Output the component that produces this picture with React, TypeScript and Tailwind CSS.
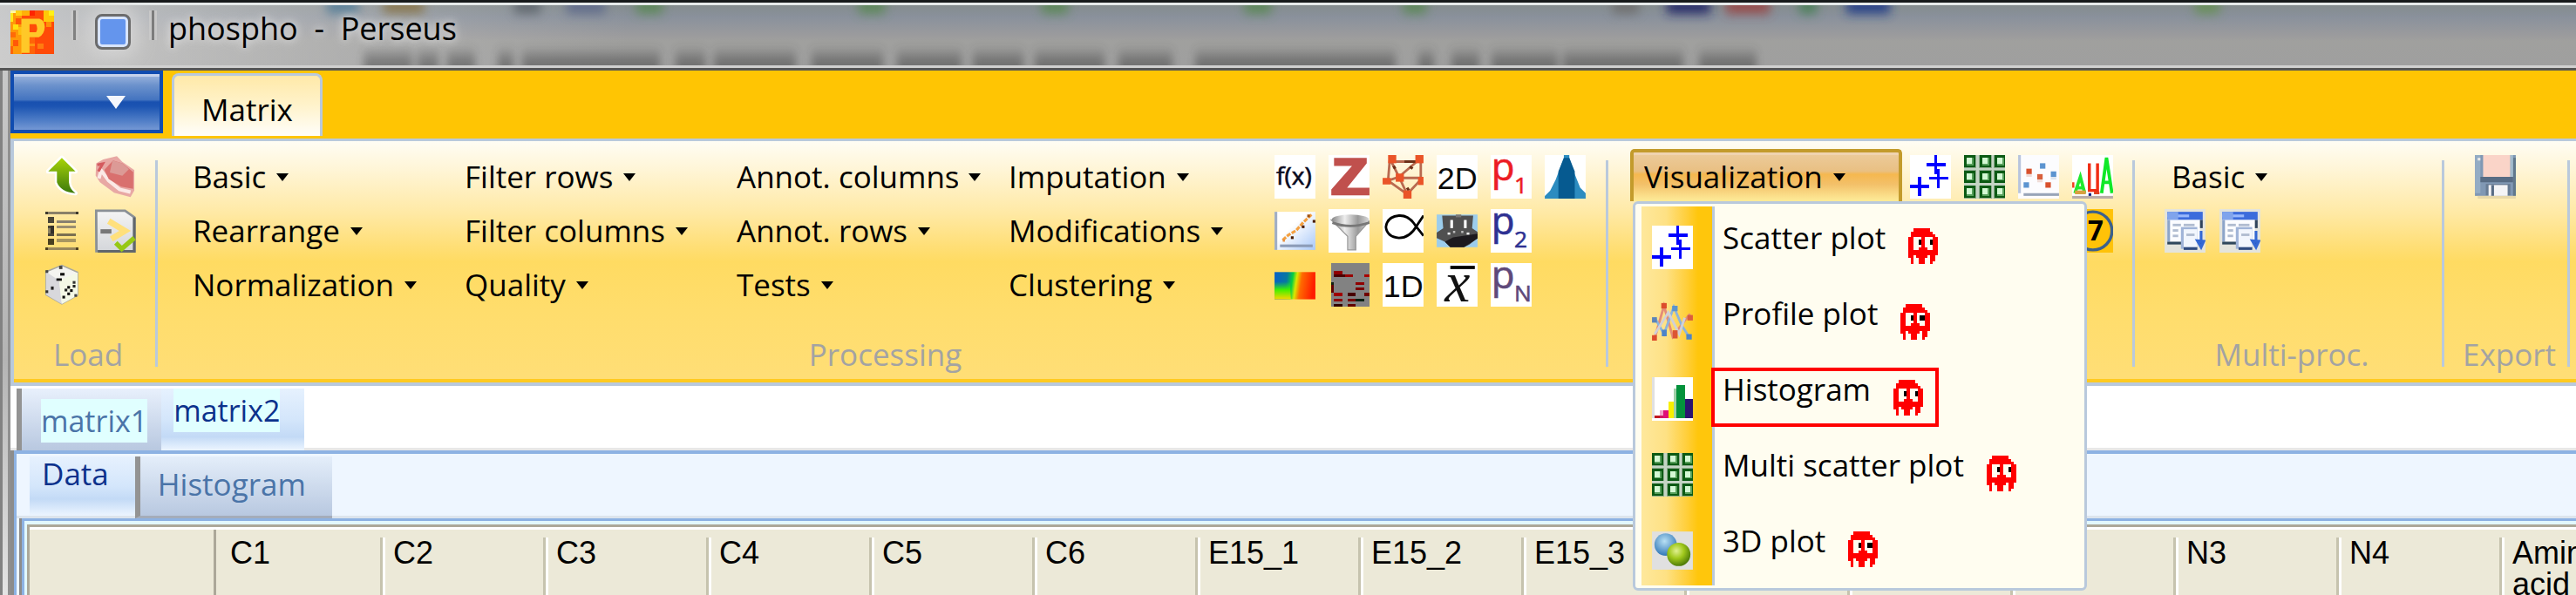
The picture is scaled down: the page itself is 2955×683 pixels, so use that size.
import React from "react";

type Run = [number, number, number, number, string];

/** Small bitmap-style drawing made of coloured blocks. */
function Blocks({ runs }: { runs: Run[] }) {
  return (
    <>
      {runs.map(([x, y, w, h, fill], i) => (
        <rect key={i} x={x} y={y} width={w} height={h} fill={fill} />
      ))}
    </>
  );
}

function Icon({ children, crisp = false }: { children: React.ReactNode; crisp?: boolean }) {
  return (
    <svg
      viewBox="0 0 15 16"
      className="block h-[50px] w-[47px] shrink-0"
      shapeRendering={crisp ? "crispEdges" : "auto"}
      aria-hidden="true"
    >
      {children}
    </svg>
  );
}

const White = () => <rect width="15" height="16" fill="#fff" />;

/* ---------- Load icons ---------- */
const UpArrow = () => (
  <Icon>
    <defs>
      <linearGradient id="up" x1="0" y1="0" x2="0" y2="1">
        <stop offset="0" stopColor="#a8d408" />
        <stop offset="1" stopColor="#3c7a0c" />
      </linearGradient>
    </defs>
    <path d="M7 1L12 6H9.6V10Q9.8 12.5 12 14Q6.6 13.6 5.2 10V6H2Z" fill="url(#up)" stroke="#fff" strokeWidth="1.6" strokeLinejoin="round" paintOrder="stroke" />
  </Icon>
);
const Brain = () => (
  <Icon>
    <path d="M0.4 3L3 1.6L8 0.4L10 2.5L14.4 5.5V13L13 15.4L7 13.8L1.8 10L0.2 7.5Z" fill="#e8a8a4" />
    <path d="M1.4 8.6L2.2 5.6L5 9.4L9 12.6L13 13.6" fill="none" stroke="#fbe9e6" strokeWidth="1.3" />
    <path d="M3.4 5.4L6.6 2L10 3L14 6.2V12.4L9.6 11.6L5 8.8Z" fill="#d9706e" />
    <path d="M6.4 2L10 3L12.4 5.2L10 7.6L5.4 6.4Z" fill="#dc9a96" />
    <path d="M0.8 3.6L2.8 3.2L1.2 6" fill="none" stroke="#d45a5e" strokeWidth="1" />
  </Icon>
);
const ListIcon = () => (
  <Icon crisp>
    <Blocks
      runs={[
        [1, 1, 12, 1, "#8a8068"], [1, 1, 1, 1, "#3e382c"], [12, 1, 1, 1, "#3e382c"],
        [1, 14, 12, 1, "#9a885c"], [1, 14, 1, 1, "#4e4020"], [12, 14, 1, 1, "#4e4020"],
        [2, 3, 2, 2, "#4a4538"], [2, 6, 2, 1, "#4a4538"], [2, 7, 2, 2, "#8a8060"], [3, 6, 1, 3, "#33302a"], [2, 9, 2, 1, "#4a4538"], [2, 11, 2, 2, "#4a4020"],
        [5, 4, 7, 1, "#888070"], [5, 6, 7, 1, "#9a8e70"], [5, 9, 7, 1, "#7c7050"], [5, 11, 7, 1, "#a89660"],
      ]}
    />
  </Icon>
);
const PageCheck = () => (
  <Icon>
    <defs>
      <linearGradient id="pg" x1="0" y1="0" x2="0" y2="1">
        <stop offset="0" stopColor="#f4f4f4" />
        <stop offset="1" stopColor="#d4d6da" />
      </linearGradient>
    </defs>
    <path d="M0.4 0.6H11L14.4 3V15.5H0.5Z" fill="url(#pg)" stroke="#8a9096" strokeWidth="0.9" />
    <path d="M14.4 3V15.5H1" fill="none" stroke="#60666c" strokeWidth="1" />
    <path d="M2 8.2H6" stroke="#777" strokeWidth="1.6" />
    <path d="M5 4.4L11 8L6 11" fill="none" stroke="#ffe07c" strokeWidth="2.2" />
    <path d="M7.6 12.4L9.8 14.6L14.4 10.6" fill="none" stroke="#96c814" strokeWidth="1.7" />
  </Icon>
);
const Dice = () => (
  <Icon>
    <path d="M1.2 3.2L7 0.8L12.8 3.4V11.8L7 15L1.2 11.6Z" fill="#f4f4f0" stroke="#a8a8a0" strokeWidth="0.5" />
    <path d="M1.2 3.2L6 6.4L7 15L1.2 11.6Z" fill="#d8d8dc" />
    <path d="M6 6.4L12.8 3.4V11.8L7 15Z" fill="#f4f8e6" />
    <Blocks
      runs={[
        [6, 1, 1.2, 1.2, "#444"], [1, 2.6, 1, 1, "#444"], [6.4, 3.6, 1.6, 1, "#111"], [5, 5.6, 2, 0.9, "#111"],
        [3, 8.6, 1, 1.2, "#222"], [1, 10, 1, 1, "#333"], [9, 8.4, 1, 1, "#111"], [10, 9.6, 1, 1, "#111"], [9, 10.8, 1, 1, "#111"],
        [11, 8, 1, 1, "#222"], [7.2, 12, 1, 1, "#111"], [11.6, 11.4, 1, 1, "#444"], [8, 9.4, 1, 1, "#222"], [11, 6.6, 1, 1, "#333"],
      ]}
    />
  </Icon>
);

/* ---------- Processing icons ---------- */
const Fx = () => (
  <Icon>
    <White />
    <text x="0.6" y="10.8" fontSize="9" fontFamily="Open Sans, sans-serif" fill="#0a0a20" stroke="#0a0a20" strokeWidth="0.2">f(x)</text>
  </Icon>
);
const ZScore = () => (
  <Icon>
    <White />
    <path d="M2 1H14V3L6.8 12H15V14.8H1V12.6L8.6 4H2Z" fill="#c0504d" />
  </Icon>
);
const Network = () => (
  <Icon>
    <g stroke="#b86a50" strokeWidth="0.9" fill="none">
      <path d="M3.5 2.4H13M3 2L6 8L9 14.4M13 2L6 8M2 9.4L6 8M6 8.4H14M14 2V9L9 14.4L2 9.4L2.6 2" />
    </g>
    <path d="M8 2.4H13M10 4.2L11 5M4 4L4.6 5M9 12L9.6 13" stroke="#6c3018" strokeWidth="1" />
    <Blocks
      runs={[
        [2, 0, 3, 3, "#ea5428"], [12, 0, 3, 3, "#ea5428"], [0, 8.4, 3, 2.4, "#ea5428"], [4.8, 6.8, 3, 3, "#ea5428"], [13, 8, 2, 3, "#ea5428"], [7.6, 13, 3, 3, "#ea5428"],
      ]}
    />
  </Icon>
);
const Dim = ({ label }: { label: string }) => (
  <Icon>
    <White />
    <text x="7.6" y="12.4" fontSize="11.5" textAnchor="middle" fontFamily="Liberation Sans, sans-serif" fill="#0a0a0a">{label}</text>
  </Icon>
);
const PValue = ({ sub, color }: { sub: string; color: string }) => (
  <Icon>
    <White />
    <text x="0.2" y="9.4" fontSize="14" fontFamily="Open Sans, sans-serif" fill={color} stroke={color} strokeWidth="0.2">
      p
      <tspan x="8.6" y="14" fontSize="8.4">{sub}</tspan>
    </text>
  </Icon>
);
const Bell = () => (
  <Icon>
    <White />
    <path d="M0 16V15L2 13L4 9L7 1V0H9V1L11 7L13 12L15 14V16Z" fill="#2c8cc0" />
    <path d="M5 16V6L7 1H9L11 6V16Z" fill="#065a90" />
  </Icon>
);
const LineScatter = () => (
  <Icon>
    <defs>
      <linearGradient id="ls" x1="0" y1="0" x2="1" y2="1">
        <stop offset="0.4" stopColor="#fff" />
        <stop offset="1" stopColor="#a8c8f8" />
      </linearGradient>
    </defs>
    <rect y="1" width="15" height="14" fill="url(#ls)" />
    <rect y="1" width="1" height="14" fill="#a0aec4" />
    <rect x="2" y="13" width="12" height="1" fill="#8c9cb8" />
    <path d="M3 11.4L5 9.6L8 7.8L10.6 4.8L13.6 2" fill="none" stroke="#f4a040" strokeWidth="1" strokeDasharray="1.6 0.5" />
    <Blocks runs={[[12, 2, 1, 1, "#a05010"], [14, 4, 1, 1, "#4a1c00"], [10, 6, 1, 1, "#4a1c00"], [6, 10, 1, 1, "#4a1c00"], [3, 11, 0.8, 1, "#e89040"]]} />
  </Icon>
);
const Funnel = () => (
  <Icon>
    <defs>
      <linearGradient id="fn" x1="0" x2="1">
        <stop offset="0" stopColor="#888" />
        <stop offset="0.35" stopColor="#eee" />
        <stop offset="0.7" stopColor="#999" />
        <stop offset="1" stopColor="#d8d8d8" />
      </linearGradient>
    </defs>
    <White />
    <path d="M1 4L7 10V15H10V10L15 4.4Z" fill="url(#fn)" stroke="#999" strokeWidth="0.4" />
    <ellipse cx="8" cy="3.8" rx="6.8" ry="1.8" fill="url(#fn)" />
    <path d="M1.4 5Q8 7.4 15 5" fill="none" stroke="#777" strokeWidth="0.9" />
  </Icon>
);
const Fish = () => (
  <Icon>
    <White />
    <path d="M15 2.4L12.6 6Q10 10.6 6 10.6Q1.6 10.2 1.2 6.6Q1.6 2.8 6 2.4Q9.6 2.2 12 6L15 9.8" fill="none" stroke="#000" strokeWidth="0.9" />
  </Icon>
);
const Cat = () => (
  <Icon>
    <rect y="2" width="15" height="12" fill="#9ccdec" />
    <path d="M2 2.4H13.4L13 7L15 8.4V10.6L12 13L10 14H5L3 12L0 10.6V8.6L2.4 7Z" fill="#505050" />
    <path d="M3 12L6 10.4L15 9V10.8L10 14H5Z" fill="#1c1a1e" />
    <Blocks runs={[[5, 4, 1, 3, "#fff"], [10, 4, 1, 3, "#fff"], [4, 8.6, 1, 0.8, "#eee"], [11, 8.6, 1, 0.8, "#eee"], [6, 8, 0.8, 0.8, "#bbb"], [9, 8, 0.8, 0.8, "#bbb"], [7, 2, 2, 1, "#777"]]} />
  </Icon>
);
const HeatMap = () => (
  <Icon>
    <defs>
      <linearGradient id="hm" x1="0" x2="1" y1="0" y2="0.1">
        <stop offset="0" stopColor="#0860c8" />
        <stop offset="0.32" stopColor="#0878a0" />
        <stop offset="0.46" stopColor="#08d040" />
        <stop offset="0.56" stopColor="#d8e800" />
        <stop offset="0.68" stopColor="#ff6a00" />
        <stop offset="1" stopColor="#ff1c00" />
      </linearGradient>
      <linearGradient id="hn" x1="0" x2="0" y1="0" y2="1">
        <stop offset="0.35" stopColor="#20e820" stopOpacity="0" />
        <stop offset="0.65" stopColor="#40f000" />
        <stop offset="1" stopColor="#f8d800" />
      </linearGradient>
    </defs>
    <rect y="3.3" width="15" height="10" fill="url(#hm)" />
    <path d="M0 3.3H5.6L6 13.3H0Z" fill="url(#hn)" />
  </Icon>
);
const RedBlocks = () => (
  <Icon crisp>
    <Blocks
      runs={[
        [1, 0, 14, 16, "#828282"], [2, 3, 3, 1, "#900000"], [2, 4, 5, 1, "#4a0000"], [6, 4, 3, 1, "#980000"], [13, 4, 2, 1, "#a80000"],
        [10, 7, 3, 1, "#900000"], [10, 9, 3, 1, "#780000"], [1, 7, 1, 1, "#102010"], [1, 8, 1, 3, "#600000"], [2, 11, 3, 1, "#a00000"],
        [7, 11, 3, 1, "#480000"], [13, 11, 2, 1, "#700000"], [2, 13, 3, 1, "#900000"], [7, 13, 3, 1, "#780000"], [10, 13, 3, 1, "#082010"], [2, 15, 3, 1, "#300000"], [7, 15, 3, 1, "#600000"],
      ]}
    />
  </Icon>
);
const XBar = () => (
  <Icon>
    <White />
    <rect x="5" y="1" width="9" height="1.2" fill="#000" />
    <text x="7.6" y="14" fontSize="21" textAnchor="middle" fontStyle="italic" fontFamily="Liberation Serif, serif" fill="#111">x</text>
  </Icon>
);

/* ---------- Visualization icons ---------- */
const Pluses = () => (
  <Icon crisp>
    <White />
    <Blocks
      runs={[
        [9, 0, 1, 7, "#00f"], [6, 3, 7, 1, "#00f"], [10, 5, 1, 7, "#00f"], [7, 8, 7, 1, "#00f"], [3, 8, 1, 7, "#00f"], [0, 11, 7, 1, "#00f"],
      ]}
    />
  </Icon>
);
const GreenGrid = () => (
  <Icon crisp>
    <rect width="15" height="16" fill="#8fac8f" />
    {[0, 5.6, 11.2].map((y) =>
      [0, 5.6, 11.2].map((x) => (
        <g key={`${x}-${y}`}>
          <rect x={x} y={y} width="4.2" height="4.6" fill="#0c5a14" />
          <rect x={x + 1} y={y + 1} width="2.6" height="2.8" fill="#58a05c" />
          <rect x={x + 1} y={y + 1} width="2" height="2.2" fill="#d4f8d4" />
        </g>
      )),
    )}
    <path d="M0 5.1H15M0 10.7H15M4.9 0V16M10.5 0V16" stroke="#c4d4c4" strokeWidth="0.8" />
  </Icon>
);
const Dots = () => (
  <Icon>
    <Blocks
      runs={[
        [0, 0, 15, 16, "#fcfcfe"], [0, 0, 1, 14, "#b8c4dc"], [2, 14, 13, 1, "#98a4b8"], [8, 3, 2, 2, "#5c94d0"], [3, 5, 2, 2, "#d8502c"], [7, 7, 2, 2, "#d8603c"],
        [12, 6, 2, 2, "#5c94d0"], [2, 10, 2, 2, "#5c94d0"], [10, 10, 2, 2, "#d8502c"], [3, 7, 2, 1, "#f0dcd8"], [7, 9, 2, 1, "#f0dcd8"], [12, 8, 2, 1, "#dce4f0"],
      ]}
    />
  </Icon>
);
const Peaks = () => (
  <Icon>
    <White />
    <path d="M1 14L3 8L4.6 14M1.4 12H4.4" fill="none" stroke="#20e830" strokeWidth="1.2" />
    <path d="M6.3 3V13H9.3V3" fill="none" stroke="#f02c14" strokeWidth="1.1" />
    <path d="M10.8 14L12.6 1L14.6 14M11.4 10H14" fill="none" stroke="#10e828" strokeWidth="1.2" />
    <Blocks runs={[[0, 15, 15, 1, "#b8aca8"], [1, 13, 4, 1.4, "#d8a040"], [0, 10, 0.8, 2, "#f04020"], [6, 14, 1, 1, "#102080"], [8, 13.4, 2, 1, "#e04020"]]} />
  </Icon>
);
const Seven = () => (
  <Icon>
    <rect width="15" height="16" fill="#ffc208" />
    <circle cx="7.6" cy="8" r="7" fill="none" stroke="#3c608c" strokeWidth="1.1" />
    <text x="8.6" y="11.6" fontSize="10" fontWeight="700" textAnchor="middle" fontFamily="Open Sans, sans-serif" fill="#000">7</text>
  </Icon>
);
const Profile = () => (
  <Icon>
    <g fill="none" strokeWidth="0.9">
      <path d="M1 13.5L4.4 1.6L7.6 13L12 7L14 4.6" stroke="#e48c78" />
      <path d="M1 6L4.4 12L8 2L11 9L14 13.6" stroke="#8cb4dc" />
      <path d="M1 12L6 4L10 12L12 6" stroke="#d0d0d8" />
    </g>
    <Blocks
      runs={[
        [3.4, 0.6, 2, 2, "#dc4c2c"], [0, 12.4, 1.8, 2, "#dc4c2c"], [7.6, 10.6, 1.8, 3, "#dc5434"], [13, 5, 2, 2, "#dc5c3c"],
        [7.4, 1.6, 2, 2, "#5c94cc"], [0, 5.8, 1.8, 2, "#5c84b8"], [3.6, 10.4, 1.8, 2.4, "#4c84c8"], [12.6, 12, 2, 2, "#4c84c8"],
      ]}
    />
  </Icon>
);
const Bars = () => (
  <Icon crisp>
    <White />
    <Blocks
      runs={[
        [0, 0, 1, 15, "#e0e0e0"], [1, 14, 2, 1, "#c01820"], [3, 12, 1, 2, "#f0a0c8"], [4, 12, 2, 3, "#e01078"], [3, 14, 1, 1, "#d01860"], [6, 9, 2, 6, "#f8f000"],
        [8, 4, 1, 11, "#a0d0a8"], [9, 3, 3, 12, "#04923c"], [12, 8, 3, 7, "#2c1470"],
      ]}
    />
  </Icon>
);
const Spheres = () => (
  <Icon>
    <defs>
      <radialGradient id="sb" cx="0.45" cy="0.35" r="0.6">
        <stop offset="0" stopColor="#b8e0f4" />
        <stop offset="1" stopColor="#3c80bc" />
      </radialGradient>
      <radialGradient id="sg" cx="0.4" cy="0.35" r="0.65">
        <stop offset="0" stopColor="#e0f090" />
        <stop offset="0.5" stopColor="#a0c81c" />
        <stop offset="1" stopColor="#507c08" />
      </radialGradient>
    </defs>
    <rect y="1" width="15" height="14" fill="#e0e0e0" />
    <circle cx="5" cy="5.8" r="4.1" fill="url(#sb)" />
    <circle cx="9.8" cy="9.4" r="4.3" fill="url(#sg)" />
  </Icon>
);
const WindowDown = () => (
  <Icon>
    <Blocks
      runs={[
        [0, 0, 15, 16, "#e4e4dc"], [1, 1, 13, 3, "#3c6cdc"], [1, 2, 8, 1, "#98b8fc"], [1, 1, 4, 3, "#80a4ec"], [1, 4, 12, 8, "#fbfcff"],
        [1, 4, 1, 8, "#8ca4c8"], [13, 4, 1, 3, "#30445c"], [1, 12, 6, 1, "#30485c"], [3, 5.4, 3, 0.9, "#b0bcd0"], [7, 5.4, 4, 0.9, "#b0bcd0"], [3, 7.4, 2, 0.9, "#b0bcd0"],
        [3, 9.4, 2, 0.9, "#b0bcd0"], [6, 6.6, 6, 8, "#a0b4d8"], [7, 7.4, 5, 6.6, "#f2f6fd"], [8, 9, 3, 0.9, "#b0bcd0"], [7, 14, 5, 1, "#304c80"],
      ]}
    />
    <path d="M13.4 8V12.4M12 11.6L13.4 14L14.4 11.8Z" fill="#2c58c0" stroke="#3468d4" strokeWidth="1" />
  </Icon>
);
const Floppy = () => (
  <Icon>
    <Blocks
      runs={[
        [0, 0, 15, 15, "#8098b4"], [0, 0, 2, 14, "#94acc4"], [3, 0, 10, 8, "#fad4c8"], [2, 8, 12, 2, "#586c84"], [4, 10.6, 9, 4.2, "#687c94"],
        [5, 11, 7, 4, "#f4f4f6"], [6, 11, 1, 4, "#586c84"], [14, 1, 1, 14, "#60788c"], [13, 0, 1, 8, "#a4bccc"], [1, 1, 1, 1, "#e8e8e8"], [1, 15, 14, 1, "#e8d8a8"],
      ]}
    />
  </Icon>
);

/** Ghost marker; `look` moves the pupils. */
const Ghost = ({ look }: { look: number }) => (
  <svg viewBox="0 0 11 13" className="block h-[41px] w-[34px] shrink-0" shapeRendering="crispEdges" aria-hidden="true">
    <Blocks
      runs={[
        [2, 0, 6, 1, "#f00"], [1, 1, 8, 1, "#f00"], [1, 2, 9, 1, "#f00"], [0, 3, 11, 7, "#f00"],
        [0, 10, 2, 1, "#f00"], [3, 10, 4, 1, "#f00"], [8, 10, 2, 1, "#f00"],
        [1, 11, 1, 2, "#f00"], [4, 10, 2, 3, "#f00"], [8, 11, 2, 1, "#f00"], [8, 12, 1, 1, "#f00"],
        [2, 3, 3, 5, "#fffdf0"], [6, 3, 3, 5, "#fffdf0"], [4, 7, 3, 1, "#f00"],
        [4, 4, 1, 2, "#000"], [9 - look, 4, look, 2, "#000"],
      ]}
    />
  </svg>
);

const Caret = () => (
  <svg viewBox="0 0 14 9" className="block h-[9px] w-[14px] shrink-0" aria-hidden="true">
    <path d="M0 0H14L7 9Z" fill="#000" />
  </svg>
);

/* ---------- Ribbon pieces ---------- */
function Drop({ label, clip = false }: { label: string; clip?: boolean }) {
  return (
    <button type="button" className="flex h-[62px] items-center gap-3 whitespace-nowrap text-left">
      <span className={clip ? "w-[254px] overflow-hidden" : ""}>{label}</span>
      <Caret />
    </button>
  );
}

function IconButton({ name, children }: { name: string; children: React.ReactNode }) {
  return (
    <button type="button" aria-label={name} className="flex h-[62px] w-[47px] items-center">
      {children}
    </button>
  );
}

function Group({ label, className, children }: { label?: string; className: string; children: React.ReactNode }) {
  return (
    <section className="flex shrink-0">
      <div className="flex flex-col pt-[10px] pb-[5px]">
        <div className={`h-[186px] ${className}`}>{children}</div>
        {label && <h2 className="mt-[25px] pl-2 text-center leading-[48px] text-[#a3a3a3]">{label}</h2>}
      </div>
      <div className="mt-[22px] mb-[18px] w-[3px] bg-[#b9c9dc]" />
    </section>
  );
}

const PROCESSING = [
  "Basic", "Filter rows", "Annot. columns", "Imputation",
  "Rearrange", "Filter columns", "Annot. rows", "Modifications",
  "Normalization", "Quality", "Tests", "Clustering",
];

const TOOLS: [string, React.ReactNode][] = [
  ["Function", <Fx />], ["Z-score", <ZScore />], ["Network", <Network />], ["2D enrichment", <Dim label="2D" />], ["One sample", <PValue sub="1" color="#ec1c24" />], ["Distribution", <Bell />],
  ["Regression", <LineScatter />], ["Filter", <Funnel />], ["Fisher", <Fish />], ["Classify", <Cat />], ["Two sample", <PValue sub="2" color="#2e3192" />], ["", null],
  ["Heat map", <HeatMap />], ["Cluster", <RedBlocks />], ["1D enrichment", <Dim label="1D" />], ["Mean", <XBar />], ["Multi sample", <PValue sub="N" color="#5f497a" />],
];

const MENU: { label: string; icon: React.ReactNode; look: number; active?: boolean }[] = [
  { label: "Scatter plot", icon: <Pluses />, look: 1 },
  { label: "Profile plot", icon: <Profile />, look: 2 },
  { label: "Histogram", icon: <Bars />, look: 1, active: true },
  { label: "Multi scatter plot", icon: <GreenGrid />, look: 1 },
  { label: "3D plot", icon: <Spheres />, look: 2 },
];

const COLUMNS = ["C1", "C2", "C3", "C4", "C5", "C6", "E15_1", "E15_2", "E15_3", "", "", "", "N3", "N4"];

function VisualizationMenu() {
  return (
    <div className="relative">
      <button
        type="button"
        aria-expanded="true"
        className="flex h-[60px] w-[312px] items-center gap-3 rounded-t-[5px] border-4 border-b-0 border-[#c39b2c] bg-[linear-gradient(#eccb9c_0%,#e9c083_38%,#f5b84f_45%,#f3c069_65%,#fbe08c_90%,#fdeb98_100%)] pl-[12px] shadow-[inset_0_3px_0_#f0d3b0]"
      >
        <span>Visualization</span>
        <Caret />
      </button>
      <ul className="absolute top-[60px] left-[3px] z-10 w-[521px] rounded-[6px] border-[3px] border-[#b9c9dc] bg-[#fffdf0] py-[3px] pl-[7px]">
        {MENU.map((m) => (
          <li key={m.label} className="h-[87px]">
            <button type="button" className="flex h-full w-full items-start text-left">
              <span className="flex h-full w-[84px] shrink-0 justify-start border-r-[3px] border-[#b9c9dc] bg-[linear-gradient(90deg,#fee89c_0%,#fee184_35%,#ffce38_65%,#ffc60c_80%)] pt-[22px] pl-[12px]">
                {m.icon}
              </span>
              <span
                className={
                  m.active
                    ? "mt-[11px] -ml-1 flex h-[68px] items-start gap-[26px] border-4 border-[#f00] pr-[14px] pl-[9px]"
                    : "flex items-start gap-[26px] pt-[15px] pl-[9px]"
                }
              >
                <span className="leading-[42px]">{m.label}</span>
                <span className="pt-[10px]">
                  <Ghost look={m.look} />
                </span>
              </span>
            </button>
          </li>
        ))}
      </ul>
    </div>
  );
}

/* Blurred window contents showing through the glass title bar. */
const SMUDGES: [number, number][] = [
  [420, 50], [482, 18], [516, 26], [574, 12], [602, 152], [778, 28], [822, 88], [934, 76], [1032, 68], [1119, 52],
  [1190, 74], [1286, 56], [1374, 224], [1630, 12], [1668, 26], [1714, 70], [1796, 132], [1952, 60],
];
const LIGHTS: [number, number, string][] = [
  [375, 36, "#58809a"], [440, 46, "#8a7850"], [590, 30, "#606870"], [650, 44, "#606c8c"], [730, 30, "#5c8858"], [985, 30, "#5c8858"], [1195, 30, "#5c8858"],
  [1428, 30, "#5c8858"], [1610, 26, "#5c8858"], [1850, 30, "#707070"], [1912, 50, "#202868"], [1980, 50, "#984848"], [2064, 20, "#488058"], [2118, 50, "#203c88"], [2518, 28, "#689058"],
];

function TitleBar() {
  return (
    <header className="relative flex h-[81px] shrink-0 items-start overflow-hidden border-t-[3px] border-b-[3px] border-t-[#16191a] border-b-[#555]">
      <div className="absolute inset-0 border-t-[3px] border-b-[3px] border-t-[#e6eaea] border-b-[#d0d0d0] bg-[linear-gradient(#848c8e_0%,#8a919c_20%,#9b9b9d_50%,#a0a09e_60%,#9f9f9f_100%)]" />
      <svg className="absolute top-[3px] left-0 h-[69px] w-full" aria-hidden="true">
        <defs>
          <filter id="soft" x="-100%" y="-100%" width="300%" height="300%"><feGaussianBlur stdDeviation="6" /></filter>
          <filter id="haze" filterUnits="userSpaceOnUse" x="380" y="0" width="1700" height="140"><feGaussianBlur stdDeviation="5 8" /></filter>
          <linearGradient id="sheen" x1="0" x2="1">
            <stop offset="0" stopColor="#d4d4d4" stopOpacity="0.85" />
            <stop offset="1" stopColor="#c0c0c0" stopOpacity="0" />
          </linearGradient>
        </defs>
        <rect width="720" height="69" fill="url(#sheen)" />
        <g filter="url(#haze)" opacity="0.42">
          {SMUDGES.map(([x, w]) => (
            <rect key={x} x={x - 3} y="56" width={w + 6} height="50" fill="#303030" />
          ))}
        </g>
        {LIGHTS.map(([x, w, c]) => (
          <rect key={x} x={x} y="-10" width={w} height="20" fill={c} opacity="0.9" filter="url(#soft)" />
        ))}
      </svg>
      <div className="relative flex items-start pt-[9px] pl-3">
        <svg viewBox="0 0 16 16" className="block size-[50px]" aria-label="Perseus" role="img">
          <rect width="16" height="16" fill="#ff4a08" />
          <g shapeRendering="crispEdges">
            <Blocks
              runs={[
                [0, 0, 4, 16, "#ff9808"], [0, 0, 2, 1, "#fff8a0"], [0, 1, 1, 3, "#ffe818"], [2, 0, 2, 2, "#ffd010"], [4, 0, 3, 2, "#ffb008"], [12, 0, 4, 4, "#ffc808"], [14, 0, 2, 2, "#fff018"],
                [2, 3, 2, 2, "#ff5808"], [1, 5, 2, 2, "#ffe010"], [3, 6, 1, 3, "#ffc010"], [0, 8, 2, 2, "#ff6a08"], [1, 11, 2, 2, "#ff5808"], [0, 13, 1, 3, "#ff6408"], [7, 0, 2, 2, "#ff2400"],
                [13, 4, 2, 2, "#ff9008"], [7, 10, 2, 6, "#ff6408"], [10, 12, 2, 2, "#ff7c10"], [7, 12, 2, 1, "#ff9410"],
              ]}
            />
          </g>
          <path d="M4 3H10.6Q12.6 3.6 12.6 6Q12.4 9 10.4 9.8H7V15.6H4ZM7 5V8H9.4Q10.2 6.6 9.4 5Z" fill="#ffc828" fillRule="evenodd" />
        </svg>
        <span className="ml-[19px] h-[34px] w-[9px] border-x-[3px] border-[#c8c8c8] bg-[#7c7c7c]" />
        <button type="button" aria-label="Quick action" className="mt-1 ml-[19px] size-[41px] rounded-[8px] border-[3px] border-[#6c6c6c] bg-[#6495ed] shadow-[inset_0_0_0_3px_#d8e4fc,0_0_24px_6px_#d8d8d8]" />
        <span className="ml-[21px] h-[34px] w-[9px] border-x-[3px] border-[#c8c8c8] bg-[#7c7c7c]" />
        <h1 className="-mt-[3px] ml-[13px] text-[36px] leading-[48px] whitespace-pre [text-shadow:0_0_8px_#e4e4e4,0_0_14px_#d8d8d8]">phospho  -  Perseus</h1>
      </div>
    </header>
  );
}

export default function App() {
  return (
    <div className="flex h-screen flex-col overflow-hidden bg-white font-['Open_Sans','Noto_Sans',sans-serif] text-[35px] leading-[48px] text-black">
      <TitleBar />
      <div className="flex min-h-0 flex-1">
        <div className="w-3 shrink-0 border-x-[3px] border-l-[#828282] border-r-[#909090] bg-[linear-gradient(#c8c8c8,#b4b4b4_55%,#e4e4e4)]" />
        <div className="flex min-w-0 flex-1 flex-col">
          <nav className="flex h-[78px] shrink-0 items-start bg-[#ffc503]">
            <button
              type="button"
              aria-label="Application menu"
              className="flex h-[72px] w-[175px] items-center justify-end border-4 border-[#104cb0] bg-[linear-gradient(#a0b8e0_0%,#6c92cc_20%,#4474c0_46%,#1850b0_50%,#1c54b2_58%,#4878c4_80%,#7498d4_100%)] pr-[39px] shadow-[inset_0_3px_0_#c4d2ec]"
            >
              <svg viewBox="0 0 22 15" className="block h-[15px] w-[22px]" aria-hidden="true">
                <path d="M0 0H22L11 15Z" fill="#f4f6fc" />
              </svg>
            </button>
            <a href="#matrix" className="mt-[3px] ml-[10px] block h-[72px] rounded-t-[8px] border-[3px] border-b-0 border-[#b9c9dc] bg-[linear-gradient(#ffe9a8,#fff3cc_50%,#fffefa)] px-[31px] pt-[15px] leading-[48px]">
              Matrix
            </a>
          </nav>

          <div className="flex h-[284px] shrink-0 border-t-[3px] border-b-4 border-l-4 border-[#b9c9dc] bg-[linear-gradient(#fffdf4_0%,#fff5d6_12%,#ffe9a4_30%,#ffdf78_43%,#ffdb62_50%,#ffdd6c_70%,#ffde76_98.5%,#ffca20_98.6%)]">
            <Group label="Load" className="grid grid-cols-[60px_47px] content-start pr-[22px] pl-[33px]">
              <IconButton name="Load matrix"><UpArrow /></IconButton>
              <IconButton name="Brain"><Brain /></IconButton>
              <IconButton name="List"><ListIcon /></IconButton>
              <IconButton name="Import"><PageCheck /></IconButton>
              <IconButton name="Random"><Dice /></IconButton>
            </Group>

            <Group label="Processing" className="flex pr-[23px] pl-[40px]">
              <div className="grid grid-cols-[312px_312px_312px_305px] content-start">
                {PROCESSING.map((p) => (
                  <Drop key={p} label={p} clip={p === "Annot. columns"} />
                ))}
              </div>
              <div className="grid grid-cols-6 content-start gap-x-[15px]">
                {TOOLS.map(([name, icon], i) =>
                  icon ? <IconButton key={i} name={name}>{icon}</IconButton> : <span key={i} />,
                )}
              </div>
            </Group>

            <Group className="pr-[22px] pl-[25px]">
              <div className="flex h-[62px] items-start gap-[9px]">
                <div className="-mt-px"><VisualizationMenu /></div>
                <div className="flex gap-[15px]">
                  <IconButton name="Scatter plot"><Pluses /></IconButton>
                  <IconButton name="Multi scatter plot"><GreenGrid /></IconButton>
                  <IconButton name="Dot plot"><Dots /></IconButton>
                  <IconButton name="Peaks"><Peaks /></IconButton>
                </div>
              </div>
              <div className="flex justify-end">
                <IconButton name="Seven"><Seven /></IconButton>
              </div>
            </Group>

            <Group label="Multi-proc." className="w-[352px] pl-[34px]">
              <div className="pl-2"><Drop label="Basic" /></div>
              <div className="flex gap-4">
                <IconButton name="Match rows"><WindowDown /></IconButton>
                <IconButton name="Match columns"><WindowDown /></IconButton>
              </div>
            </Group>

            <Group label="Export" className="w-[141px] pl-[35px]">
              <IconButton name="Save"><Floppy /></IconButton>
            </Group>
          </div>

          <nav className="flex h-[74px] shrink-0 items-stretch border-b-[3px] border-[#e8e8e8] bg-white pt-[3px] pl-[7px] text-[34px]">
            <a href="#matrix1" className="-mb-[3px] block border-l-[6px] border-[#939393] bg-[linear-gradient(#e8f0fc,#b8c8e0)] pt-[12px] pr-4 pl-[22px] text-[#4a74a8]">
              <span className="block h-[50px] bg-[#e0ffff] leading-[50px]">matrix1</span>
            </a>
            <a href="#matrix2" className="-mb-[3px] block bg-[linear-gradient(#e6f1fe,#d4e6fb_50%,#c3daf6_78%,#ecf5ff)] pr-7 pl-[14px] text-[#0c318c]">
              <span className="block h-[50px] bg-[#e0ffff] leading-[50px]">matrix2</span>
            </a>
          </nav>

          <div className="flex min-h-0 flex-1 flex-col border-l-4 border-[#8c8c8c]">
            <div className="flex min-h-0 flex-1 flex-col border-t-4 border-l-[3px] border-[#8db2e3] bg-[#eef6ff]">
              <nav className="flex h-[74px] shrink-0 items-stretch border-b-[3px] border-[#dce4ec] pt-[3px] pl-[15px]">
                <a href="#data" className="block bg-[linear-gradient(#e6f1fe,#d4e6fb_50%,#c3daf6_72%,#ecf5ff)] pr-[30px] pl-[14px] leading-[40px] text-[#0c318c]">Data</a>
                <a href="#histogram" className="-mb-[3px] block border-b-[3px] border-l-[6px] border-b-[#a4acba] border-l-[#939393] bg-[linear-gradient(#e4eefa,#b8c8e0)] pt-2 pr-[30px] pl-5 text-[#4a74a8]">Histogram</a>
              </nav>
              <div className="ml-[3px] flex min-h-0 flex-1 flex-col border-l-[3px] border-[#8c8c8c]">
                <div className="min-h-0 flex-1 border-t-[3px] border-l-[3px] border-[#8db2e3] bg-[#e2f8fd] pt-1 pl-[3px]">
                  <div className="h-full overflow-hidden border-t-[3px] border-l-[3px] border-[#aca899] bg-[#ece9d8]">
                    <table className="w-[3060px] min-w-full table-fixed border-separate border-spacing-0 border-t-[3px] border-white font-['Liberation_Sans',Arial,sans-serif] text-[36px] leading-[36px]">
                      <thead>
                        <tr>
                          <td className="w-[214px] border-r-[3px] border-[#aca899] p-0" />
                          {COLUMNS.map((c, i) => (
                            <th
                              key={i}
                              scope="col"
                              className={i === 0 ? "w-[194px] p-0 pt-[9px] text-left font-normal" : "w-[187px] p-0 pt-[9px] text-left font-normal"}
                            >
                              <div className="h-[84px] border-r-[3px] border-white">
                                <div className={i === 0 ? "h-full border-r-[3px] border-[#c6c3ae] pl-4" : "h-full border-r-[3px] border-[#c6c3ae] pl-[9px]"}>{c}</div>
                              </div>
                            </th>
                          ))}
                          <th scope="col" className="p-0 pt-[9px] text-left align-top font-normal">
                            <div className="w-[120px] pl-[9px]">Amino acid</div>
                          </th>
                        </tr>
                      </thead>
                    </table>
                  </div>
                </div>
              </div>
            </div>
          </div>
        </div>
      </div>
    </div>
  );
}
